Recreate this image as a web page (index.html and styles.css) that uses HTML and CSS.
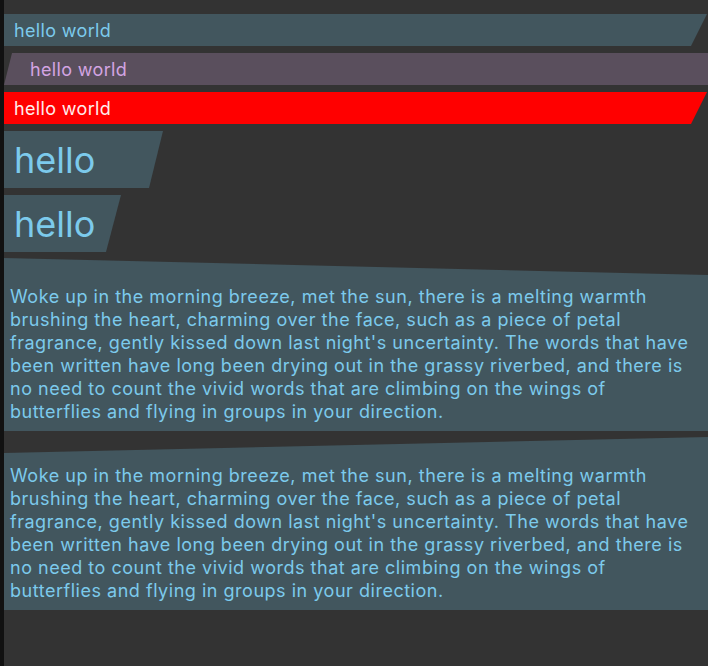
FILE: index.html
```html
<!DOCTYPE html>
<html>
<head>
<meta charset="utf-8">
<link rel="stylesheet" href="styles.css">
</head>
<body>
<div class="page">
  <div class="bar bar-teal slant-right">hello world</div>
  <div class="bar bar-purple slant-left">hello world</div>
  <div class="bar bar-red slant-right">hello world</div>
  <div class="big big-one">hello</div>
  <div class="big big-two">hello</div>
  <div class="block block-down">Woke up in the morning breeze, met the sun, there is a melting warmth brushing the heart, charming over the face, such as a piece of petal fragrance, gently kissed down last night's uncertainty. The words that have been written have long been drying out in the grassy riverbed, and there is no need to count the vivid words that are climbing on the wings of butterflies and flying in groups in your direction.</div>
  <div class="block block-up">Woke up in the morning breeze, met the sun, there is a melting warmth brushing the heart, charming over the face, such as a piece of petal fragrance, gently kissed down last night's uncertainty. The words that have been written have long been drying out in the grassy riverbed, and there is no need to count the vivid words that are climbing on the wings of butterflies and flying in groups in your direction.</div>
</div>
</body>
</html>
```

FILE: styles.css
```css
html, body {
  margin: 0;
  padding: 0;
  height: 100%;
}

body {
  background: #333333;
  font-family: Inter, Roboto, sans-serif;
}

.page {
  min-height: 100%;
  box-sizing: border-box;
  border-left: 4px solid #111111;
  padding-top: 14px;
  display: flex;
  flex-direction: column;
  gap: 7px;
}

.bar {
  height: 32px;
  display: flex;
  align-items: center;
  font-size: 18px;
  letter-spacing: 0.35px;
  padding-left: 10px;
}

.slant-right {
  clip-path: polygon(0 0, calc(100% - 1px) 0, calc(100% - 17px) 100%, 0 100%);
}

.slant-left {
  clip-path: polygon(8px 0, 100% 0, 100% 100%, 0 100%);
}

.bar-teal {
  background: #42565e;
  color: #7ccaec;
}

.bar-purple {
  background: #5a4f5d;
  color: #d3a4e2;
  padding-left: 26px;
}

.bar-red {
  background: #ff0000;
  color: #ffecec;
}

.big {
  height: 57px;
  display: flex;
  align-items: center;
  font-size: 36px;
  padding-left: 10px;
  box-sizing: border-box;
  background: #42565e;
  color: #7ccaec;
}

.big-one {
  width: 159px;
  clip-path: polygon(0 0, 100% 0, calc(100% - 14px) 100%, 0 100%);
}

.big-two {
  width: 117px;
  clip-path: polygon(0 0, 100% 0, calc(100% - 15px) 100%, 0 100%);
}

.block {
  background: #42565e;
  color: #7ccaec;
  font-size: 18px;
  letter-spacing: 0.52px;
  line-height: 23px;
  padding: 27px 6px 8px 6px;
  margin-top: -1px;
}

.block-down {
  clip-path: polygon(0 0, 100% 17px, 100% 100%, 0 100%);
}

.block-up {
  clip-path: polygon(0 16px, 100% 0, 100% 100%, 0 100%);
}
```
